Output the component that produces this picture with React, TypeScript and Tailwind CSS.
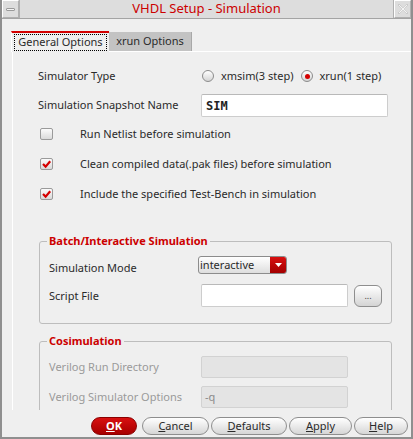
import React from "react";

const red = "#cc0000";

function Radio({ checked }: { checked?: boolean }) {
  return (
    <span className="w-[12px] h-[12px] rounded-full border border-[#8c8c8c] bg-gradient-to-b from-[#ffffff] to-[#d4d4d4] flex items-center justify-center shrink-0">
      {checked && <span className="w-[5px] h-[5px] rounded-full bg-[#d40000]" />}
    </span>
  );
}

function Check({ checked }: { checked?: boolean }) {
  return (
    <span className="w-[13px] h-[12px] rounded-[2px] border border-[#9a9a9a] bg-gradient-to-b from-[#fbfbfb] to-[#dadada] flex items-center justify-center shrink-0">
      {checked && (
        <svg width="11" height="10" viewBox="0 0 11 10">
          <path d="M2 5 L4.6 7.6 L9.2 2.2" fill="none" stroke="#d40000" strokeWidth="2.2" />
        </svg>
      )}
    </span>
  );
}

function Field({ value, disabled, className }: { value?: string; disabled?: boolean; className?: string }) {
  return (
    <div
      className={
        "rounded-[2px] border flex items-center shrink-0 " +
        (disabled
          ? "bg-[#e4e4e4] border-[#d2d2d2] text-[#8a8a8a]"
          : "bg-white border-[#cdcdcd] border-t-[#b9b9b9]") +
        " " +
        (className ?? "")
      }
    >
      {value}
    </div>
  );
}

function Btn({ children, w, primary }: { children: React.ReactNode; w: string; primary?: boolean }) {
  return (
    <div
      className={
        "h-[18px] rounded-full border flex items-center justify-center " +
        w +
        (primary
          ? " bg-gradient-to-b from-[#d81010] to-[#a80000] border-[#8a0000] text-white font-bold"
          : " bg-gradient-to-b from-[#ffffff] to-[#d6d6d6] border-[#8e8e8e] text-[#2a2a2a]")
      }
    >
      {children}
    </div>
  );
}

function Group({ title, children }: { title: string; children: React.ReactNode }) {
  return (
    <fieldset className="ml-[26px] w-[353px] rounded-[3px] border border-[#bdbdbd] p-0">
      <legend className="ml-[7px] px-[2px] text-[11px] leading-[14px] font-bold text-[#cc0000]">{title}</legend>
      {children}
    </fieldset>
  );
}

export default function App() {
  return (
    <div className="w-[413px] h-[439px] bg-[#efefef] border-l-2 border-r-2 border-b-2 border-[#8f8f8f] flex flex-col font-['Noto_Sans',sans-serif] text-[11px] text-[#2a2a2a] overflow-hidden">
      {/* title bar */}
      <div className="h-[19px] flex bg-[#dddddd] border-b border-[#a4a4a4] shrink-0">
        <div className="w-[17px] border border-[#b0b0b0] border-t-white border-l-white flex items-center justify-center">
          <span className="w-[9px] h-[3px] rounded-[1px] border border-[#9a9a9a] bg-[#f4f4f4]" />
        </div>
        <div className="flex-1 flex items-center justify-center text-[13px] border-x border-[#b0b0b0]" style={{ color: red }}>
          VHDL Setup - Simulation
        </div>
        <div className="w-[17px] border border-[#b0b0b0] border-t-white border-l-white flex items-center justify-center">
          <svg width="12" height="12" viewBox="0 0 12 12">
            <path
              d="M1 2 L2 1 L6 5 L10 1 L11 2 L7 6 L11 10 L10 11 L6 7 L2 11 L1 10 L5 6 Z"
              fill="#f4f4f4"
              stroke="#b4b4b4"
              strokeWidth="0.8"
              strokeDasharray="1 0.6"
            />
          </svg>
        </div>
      </div>

      {/* tabs */}
      <div className="mt-[12px] h-[20px] pl-[9px] flex items-start shrink-0">
        <div className="relative z-10 w-[98px] h-[21px] bg-[#efefef] border-t-2 border-[#d40000] border-l border-l-white px-[2px] pt-[1px] pb-[1px]">
          <div className="h-full border border-dotted border-black flex items-center justify-center">General Options</div>
        </div>
        <div className="mt-[1px] w-[83px] h-[19px] bg-[#c3c3c3] border-r border-[#a8a8a8] flex items-center justify-center">
          xrun Options
        </div>
      </div>

      {/* panel */}
      <div className="ml-[10px] h-[359px] border-t border-l border-white overflow-hidden shrink-0">
        <div className="mt-[13px] h-[22px] pl-[25px] flex items-center">
          <span className="w-[164px]">Simulator Type</span>
          <Radio />
          <span className="ml-[7px]">xmsim(3 step)</span>
          <span className="ml-[8px]"><Radio checked /></span>
          <span className="ml-[6px]">xrun(1 step)</span>
        </div>
        <div className="mt-[7px] h-[23px] pl-[25px] flex items-center">
          <span className="w-[163px]">Simulation Snapshot Name</span>
          <Field
            value="SIM"
            className="w-[187px] h-[23px] pl-[4px] font-['DejaVu_Sans_Mono',monospace] font-bold text-[12px] text-[#222]"
          />
        </div>
        <div className="mt-[7px] h-[20px] pl-[27px] flex items-center">
          <Check />
          <span className="ml-[27px]">Run Netlist before simulation</span>
        </div>
        <div className="mt-[10px] h-[20px] pl-[27px] flex items-center">
          <Check checked />
          <span className="ml-[27px]">Clean compiled data(.pak files) before simulation</span>
        </div>
        <div className="mt-[10px] h-[20px] pl-[27px] flex items-center">
          <Check checked />
          <span className="ml-[27px]">Include the specified Test-Bench in simulation</span>
        </div>

        <div className="mt-[30px]">
          <Group title="Batch/Interactive Simulation">
            <div className="pl-[9px] pt-[8px] pb-[16px]">
              <div className="h-[18px] flex items-center">
                <span className="w-[149px] pt-[6px]">Simulation Mode</span>
                <div className="w-[89px] h-[18px] rounded-[3px] border border-[#8c8c8c] bg-gradient-to-b from-[#ffffff] to-[#dedede] flex overflow-hidden">
                  <span className="flex-1 pl-[1px] leading-[16px]">interactive</span>
                  <span className="w-[16px] bg-gradient-to-b from-[#d81010] to-[#a40000] flex items-center justify-center">
                    <svg width="7" height="4" viewBox="0 0 7 4">
                      <path d="M0 0 L7 0 L3.5 4 Z" fill="#fff" />
                    </svg>
                  </span>
                </div>
              </div>
              <div className="mt-[10px] h-[23px] flex items-center">
                <span className="w-[152px] pt-[1px]">Script File</span>
                <Field className="w-[147px] h-[23px]" />
                <div className="ml-[6px] w-[28px] h-[22px] rounded-[6px] border border-[#8e8e8e] bg-gradient-to-b from-[#ffffff] to-[#d4d4d4] flex items-center justify-center text-[9px] text-[#444]">
                  ...
                </div>
              </div>
            </div>
          </Group>
        </div>

        <div className="mt-[10px]">
          <Group title="Cosimulation">
            <div className="pl-[9px] pt-[8px] pb-[20px] text-[#9a9a9a]">
              <div className="h-[22px] flex items-center">
                <span className="w-[152px]">Verilog Run Directory</span>
                <Field disabled className="w-[147px] h-[22px]" />
              </div>
              <div className="mt-[8px] h-[22px] flex items-center">
                <span className="w-[152px]">Verilog Simulator Options</span>
                <Field disabled value="-q" className="w-[147px] h-[22px] pl-[3px] text-[#7a7a7a]" />
              </div>
            </div>
          </Group>
        </div>
      </div>

      {/* buttons */}
      <div className="h-[27px] pt-[7px] pr-[3px] flex justify-end items-start gap-[2px] shrink-0">
        <Btn w="w-[46px] mr-[3px]" primary>
          <span><u>O</u>K</span>
        </Btn>
        <Btn w="w-[67px]"><span><u>C</u>ancel</span></Btn>
        <Btn w="w-[76px]"><span><u>D</u>efaults</span></Btn>
        <Btn w="w-[63px]"><span><u>A</u>pply</span></Btn>
        <Btn w="w-[54px]"><span><u>H</u>elp</span></Btn>
      </div>
    </div>
  );
}
